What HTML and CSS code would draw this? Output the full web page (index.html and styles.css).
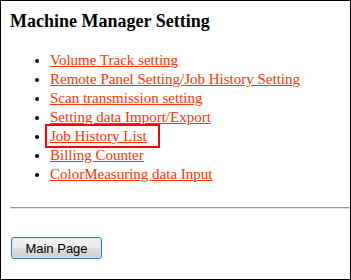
FILE: index.html
```html
<!DOCTYPE html>
<html lang="en">
<head>
    <meta charset="UTF-8">
    <title>Machine Manager Setting</title>
    <link rel="stylesheet" href="styles.css">
</head>
<body>
    <div class="frame">
        <h1 class="title">Machine Manager Setting</h1>
        <ul class="menu">
            <li><a href="#">Volume Track setting</a></li>
            <li><a href="#">Remote Panel Setting/Job History Setting</a></li>
            <li><a href="#">Scan transmission setting</a></li>
            <li><a href="#">Setting data Import/Export</a></li>
            <li><span class="marked"><a href="#">Job History List</a></span></li>
            <li><a href="#">Billing Counter</a></li>
            <li><a href="#">ColorMeasuring data Input</a></li>
        </ul>
        <hr class="divider">
        <button type="button" class="main-btn">Main Page</button>
    </div>
</body>
</html>
```

FILE: styles.css
```css
* {
    box-sizing: border-box;
}

html, body {
    margin: 0;
    padding: 0;
    background-color: white;
}

.frame {
    width: 351px;
    height: 280px;
    border: 1px solid #000;
    padding: 0 0 0 9px;
    font-family: 'Liberation Serif', 'Times New Roman', serif;
    color: #000;
}

.title {
    font-size: 18px;
    font-weight: bold;
    margin: 9px 0 0;
    line-height: 22px;
}

.menu {
    margin: 19px 0 0;
    padding-left: 40px;
    font-size: 15px;
    line-height: 19px;
}

.menu a {
    color: #ff3300;
    text-decoration: underline;
}

.marked {
    position: relative;
}

.marked::after {
    content: '';
    position: absolute;
    left: -5px;
    right: -13px;
    top: -4px;
    bottom: -4px;
    border: 2px solid #ff0000;
}

.divider {
    margin: 23px 0 0;
    border: 0;
    border-top: 1px solid #a0a0a0;
    border-bottom: 1px solid #e3e3e3;
}

.main-btn {
    display: block;
    margin: 28px 0 0 1px;
    width: 91px;
    height: 22px;
    padding: 0;
    font-family: 'Liberation Sans', Arial, sans-serif;
    font-size: 13px;
    color: #000;
    border: 1px solid #3c7fb1;
    border-radius: 3px;
    background: linear-gradient(to bottom, #f2f2f2 0%, #ebebeb 50%, #dddddd 51%, #cfcfcf 100%);
    box-shadow: inset 0 0 0 1px #c5e7f7;
}
```
